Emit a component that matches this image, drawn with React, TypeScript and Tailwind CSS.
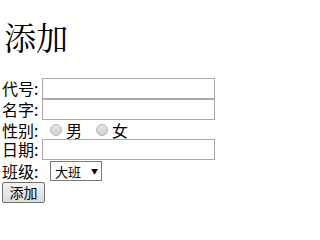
const labelFont = { fontFamily: '"Noto Sans CJK SC", sans-serif' };

function Field({ label }: { label: string }) {
  return (
    <div className="flex h-[21px] items-center">
      <span className="w-[40px] text-[16px] leading-[19px]">{label}:</span>
      <input
        type="text"
        className="h-[21px] w-[173px] border border-[#a9a9a9] bg-white px-[2px] text-[13px] outline-none"
      />
    </div>
  );
}

function Radio({ label }: { label: string }) {
  return (
    <label className="flex items-center">
      <span className="mx-[4px] h-[12px] w-[12px] rounded-full border border-[#b5b5b5] bg-gradient-to-b from-[#e6e6e6] to-[#cfcfcf]" />
      <span className="text-[16px] leading-[18px]">{label}</span>
    </label>
  );
}

export default function App() {
  return (
    <div className="h-[216px] w-[258px] bg-white pl-[2px] text-black" style={labelFont}>
      <h1
        className="pl-[2px] pt-[18px] text-[32px] leading-[37px] font-normal"
        style={{ fontFamily: '"Noto Serif CJK SC", "Liberation Serif", "Noto Sans CJK SC", serif' }}
      >
        添加
      </h1>
      <form className="mt-[23px] flex flex-col">
        <Field label="代号" />
        <Field label="名字" />
        <div className="flex h-[19px] items-center">
          <span className="w-[44px] text-[16px] leading-[18px]">性别:</span>
          <Radio label="男" />
          <span className="w-[10px]" />
          <Radio label="女" />
        </div>
        <Field label="日期" />
        <div className="flex h-[22px] items-center">
          <span className="w-[48px] text-[16px] leading-[19px]">班级:</span>
          <div className="flex h-[20px] w-[52px] items-center justify-between border border-[#7a7a7a] bg-white pl-[4px] pr-[3px]">
            <span className="text-[13px] leading-[17px]">大班</span>
            <span className="text-[7px] leading-[8px]">▼</span>
          </div>
        </div>
        <div className="flex">
          <button
            type="button"
            className="h-[21px] w-[43px] rounded-[2px] border border-[#707070] bg-gradient-to-b from-[#f2f2f2] to-[#dcdcdc] text-[14px] leading-[19px]"
          >
            添加
          </button>
        </div>
      </form>
    </div>
  );
}
